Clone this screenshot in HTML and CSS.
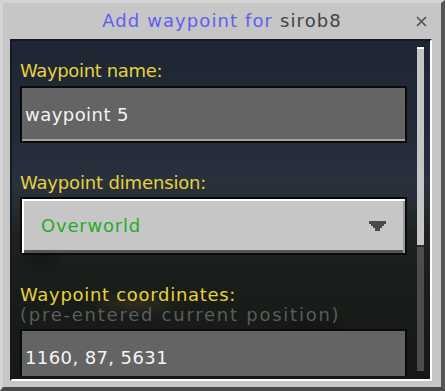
FILE: index.html
```html
<!DOCTYPE html>
<html lang="en">
<head>
<meta charset="utf-8">
<title>Add waypoint</title>
<link rel="stylesheet" href="styles.css">
</head>
<body>
<div class="window">
  <header class="titlebar">
    <span class="spacer"></span>
    <h1 class="title"><span class="title-blue">Add waypoint for</span> <span class="title-name">sirob8</span></h1>
    <button class="close" aria-label="Close">
      <svg width="11" height="11" viewBox="0 0 11 11"><path d="M1 1 L10 10 M10 1 L1 10" stroke="#505050" stroke-width="1.6" fill="none"/></svg>
    </button>
  </header>
  <div class="panel">
    <div class="scroll">
      <div class="form">
        <div class="label label-name">Waypoint name:</div>
        <div class="field"><span class="field-text text-name">waypoint 5</span></div>
        <div class="label label-dim">Waypoint dimension:</div>
        <div class="dropdown">
          <span class="dropdown-text">Overworld</span>
          <svg class="arrow" width="17" height="10" viewBox="0 0 17 10"><polygon points="0,0 17,0 17,3 15,3 15,5 13,5 13,7 11,7 11,10 6,10 6,7 4,7 4,5 2,5 2,3 0,3" fill="#4a4a4a"/></svg>
        </div>
        <div class="label label-coord">Waypoint coordinates:</div>
        <div class="hint">(pre-entered current position)</div>
        <div class="field"><span class="field-text text-coords">1160, 87, 5631</span></div>
      </div>
    </div>
    <div class="scrollbar"><div class="thumb"></div></div>
  </div>
</div>
</body>
</html>
```
FILE: styles.css
```css
html, body {
  margin: 0;
  padding: 0;
  background: #505050;
}

body {
  font-family: "DejaVu Sans", sans-serif;
  font-size: 18px;
  line-height: 20px;
}

.window {
  box-sizing: border-box;
  width: 445px;
  height: 391px;
  border-left: 3px solid #d4d4d4;
  border-top: 3px solid #d4d4d4;
  border-right: 4px solid #555555;
  border-bottom: 4px solid #4a4a4a;
  background: #c6c6c6;
  display: flex;
  flex-direction: column;
}

.titlebar {
  height: 36px;
  flex: none;
  display: grid;
  grid-template-columns: 1fr auto 1fr;
  align-items: center;
}

.title {
  margin: 0;
  font-size: 18px;
  font-weight: normal;
  line-height: 20px;
  letter-spacing: 1.1px;
  white-space: nowrap;
}

.title-blue { color: #5f5ff0; }
.title-name { color: #444444; }

.close {
  justify-self: end;
  margin-right: 14px;
  padding: 0;
  border: 0;
  background: none;
  width: 11px;
  height: 11px;
  display: flex;
}

.panel {
  flex: 1;
  margin: 0 9px 6px 7px;
  border-top: 2px solid #151a22;
  border-left: 2px solid #151a22;
  border-right: 2px solid #ffffff;
  border-bottom: 2px solid #ffffff;
  display: flex;
  background:
    radial-gradient(ellipse 70px 20px at 125px 262px, rgba(95, 75, 45, 0.35), transparent 70%),
    radial-gradient(ellipse 40px 45px at 30px 205px, rgba(8, 12, 8, 0.55), transparent 70%),
    radial-gradient(ellipse 60px 30px at 300px 290px, rgba(8, 12, 8, 0.4), transparent 70%),
    linear-gradient(180deg, #1f2633 0, #232b39 100px, #29313e 140px, #282e35 158px, #1f2422 190px, #1a1e1a 230px, #151814 100%);
}

.scroll {
  flex: 1;
  height: 335px;
  overflow: hidden;
  padding-left: 8px;
}

.form {
  width: 387px;
  padding-top: 20px;
}

.label {
  color: #e6d23a;
  white-space: nowrap;
}

.label-name { letter-spacing: -0.35px; }
.label-dim { letter-spacing: -0.16px; }
.label-coord { letter-spacing: 0.7px; }

.hint {
  color: #5c5c5c;
  letter-spacing: 1.75px;
  white-space: nowrap;
}

.label + .field { margin-top: 5px; }
.hint + .field { margin-top: 4px; }
.label + .dropdown { margin-top: 4px; }
.field + .label,
.dropdown + .label { margin-top: 30px; }

.field {
  box-sizing: border-box;
  height: 57px;
  border: 2px solid #0a0a0a;
  background: #646464;
  box-shadow: inset 0 -2px 0 #a2a2a2;
  display: flex;
  align-items: center;
  padding-left: 3px;
}

.field-text {
  color: #f4f4f4;
  white-space: nowrap;
}

.text-name { letter-spacing: 0.45px; }
.text-coords { letter-spacing: 0.4px; }

.dropdown {
  box-sizing: border-box;
  height: 58px;
  border: 2px solid #0a0a0a;
  background: #c6c6c6;
  box-shadow: inset 2px 2px 0 #ffffff, inset -2px 0 0 #9a9a9a, inset 0 -3px 0 #555555;
  display: flex;
  align-items: center;
  padding-left: 19px;
  padding-right: 19px;
}

.dropdown-text {
  color: #1fae1f;
  letter-spacing: 0.8px;
}

.arrow {
  margin-left: auto;
  display: block;
}

.scrollbar {
  flex: none;
  width: 7px;
  height: 324px;
  margin: 6px 6px 0 0;
  background: #4d4d4d;
}

.thumb {
  height: 198px;
  background: #c6c6c6;
  box-shadow: inset 0 2px 0 #ffffff;
  border-bottom: 2px solid #2e2e2e;
}
```
